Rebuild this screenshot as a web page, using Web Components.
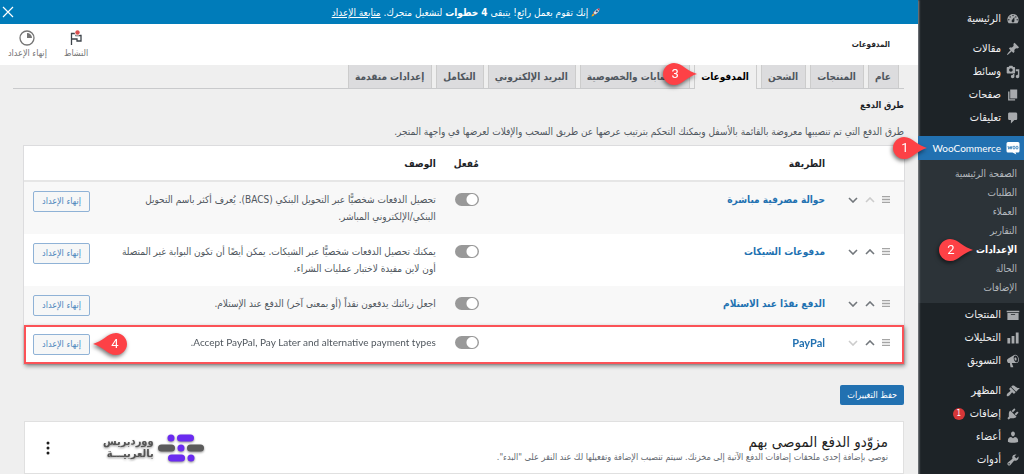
<!DOCTYPE html>
<html lang="ar" dir="rtl">
<head>
<meta charset="utf-8">
<meta name="viewport" content="width=device-width, initial-scale=1">
<title>المدفوعات ‹ WooCommerce</title>
<style>
  html, body { margin: 0; }
  body {
    font: 11px/17px "DejaVu Sans Condensed", "DejaVu Sans", "Noto Sans", sans-serif;
    color: #3c434a;
    background: #efefef;
  }
</style>
</head>
<body>
<admin-shell>
  <admin-menu slot="menu"></admin-menu>
  <setup-banner></setup-banner>
  <page-header heading="المدفوعات"></page-header>
  <settings-tabs></settings-tabs>
  <payment-methods></payment-methods>
  <provider-card>
    <span slot="title">مزوّدو الدفع الموصى بهم</span>
    <span slot="text">نوصي بإضافة إحدى ملحقات إضافات الدفع الآتية إلى مخزنك. سيتم تنصيب الإضافة وتفعيلها لك عند النقر على "البدء".</span>
  </provider-card>
</admin-shell>

<script>
const define = (name, render) => customElements.define(name, class extends HTMLElement {
  constructor() { super(); this.attachShadow({ mode: 'open' }); }
  connectedCallback() { this.shadowRoot.innerHTML = render(this); }
});

const ICONS = {
  dashboard: 'M3.76 16h12.48c1.1-1.37 1.76-3.11 1.76-5 0-4.42-3.58-8-8-8s-8 3.58-8 8c0 1.89.66 3.63 1.76 5zM10 4c.55 0 1 .45 1 1s-.45 1-1 1-1-.45-1-1 .45-1 1-1zM6 6c.55 0 1 .45 1 1s-.45 1-1 1-1-.45-1-1 .45-1 1-1zm8 0c.55 0 1 .45 1 1s-.45 1-1 1-1-.45-1-1 .45-1 1-1zm-5.37 5.55L12 7v6c0 1.1-.9 2-2 2s-2-.9-2-2c0-.57.24-1.08.63-1.45zM4 10c.55 0 1 .45 1 1s-.45 1-1 1-1-.45-1-1 .45-1 1-1zm12 0c.55 0 1 .45 1 1s-.45 1-1 1-1-.45-1-1 .45-1 1-1z',
  post: 'M10.44 3.02l1.82-1.82 6.36 6.35-1.83 1.82c-1.05-.68-2.48-.57-3.41.36l-.75.75c-.92.93-1.04 2.35-.35 3.41l-1.83 1.82-2.41-2.41-2.8 2.79c-.42.42-3.38 2.71-3.8 2.29s1.86-3.39 2.28-3.81l2.79-2.79L4.1 9.36l1.83-1.82c1.05.69 2.48.57 3.4-.36l.75-.75c.93-.92 1.05-2.35.36-3.41z',
  media: 'M13 11V4c0-.55-.45-1-1-1h-1.67L9 1H5L3.67 3H2c-.55 0-1 .45-1 1v7c0 .55.45 1 1 1h10c.55 0 1-.45 1-1zM7 4.5c1.38 0 2.5 1.12 2.5 2.5S8.38 9.5 7 9.5 4.5 8.38 4.5 7 5.62 4.5 7 4.5zM14 6h5v10.5c0 1.38-1.12 2.5-2.5 2.5S14 17.88 14 16.5s1.12-2.5 2.5-2.5c.17 0 .34.02.5.05V9h-3V6zm-4 8.05V13h2v3.5c0 1.38-1.12 2.5-2.5 2.5S7 17.88 7 16.5 8.12 14 9.5 14c.17 0 .34.02.5.05z',
  page: 'M6 15V2h10v13H6zm-1 1h8v2H3V5h2v11z',
  comments: 'M5 2h9c1.1 0 2 .9 2 2v7c0 1.1-.9 2-2 2h-2l-5 5v-5H5c-1.1 0-2-.9-2-2V4c0-1.1.9-2 2-2z',
  archive: 'M19 4v2H1V4h18zM2 7h16v10H2V7zm11 3V9H7v1h6z',
  chart: 'M18 18V2h-4v16h4zm-6 0V7H8v11h4zm-6 0v-8H2v8h4z',
  megaphone: 'M18.15 5.94c.46 1.62.38 3.22-.02 4.48-.42 1.28-1.26 2.18-2.3 2.48-.16.06-.26.06-.4.06-.06.02-.12.02-.18.02-.06.02-.14.02-.22.02h-6.8l2.22 5.5c.02.14-.06.26-.14.34-.08.1-.24.16-.34.16H6.95c-.1 0-.26-.06-.34-.16-.08-.08-.16-.2-.14-.34l-1-5.5H4.25l-.02-.02c-.5.06-1.08-.18-1.54-.62s-.88-1.08-1.06-1.88c-.24-.8-.2-1.56-.02-2.2.18-.62.58-1.08 1.06-1.3l.02-.02 9-5.4c.1-.06.18-.1.24-.16.06-.04.14-.08.24-.12.16-.08.28-.12.5-.18 1.04-.3 2.24.1 3.22.98s1.84 2.24 2.26 3.86zm-2.58 5.98h-.02c.4-.1.74-.34 1.04-.7.58-.7.86-1.76.86-3.04 0-.64-.1-1.3-.28-1.98-.34-1.36-1.02-2.5-1.78-3.24s-1.68-1.1-2.46-.88c-.82.22-1.4.96-1.7 2-.32 1.04-.28 2.36.06 3.72.38 1.36 1 2.5 1.8 3.24.78.74 1.62 1.1 2.48.88zm-2.54-7.08c.22-.04.42-.02.62.04.38.16.76.48 1.02 1s.42 1.2.42 1.78c0 .3-.04.56-.12.8-.18.48-.44.84-.86.94-.34.1-.8-.06-1.14-.4s-.64-.86-.78-1.5c-.18-.62-.12-1.24.02-1.72s.48-.84.82-.94z',
  appearance: 'M14.48 11.06L7.41 3.99l1.5-1.5c.5-.56 2.3-.47 3.51.32 1.21.8 1.43 1.28 2.91 2.1 1.18.64 2.45 1.26 4.45.85zm-.71.71L6.7 4.7 4.93 6.47c-.39.39-.39 1.02 0 1.41l1.06 1.06c.39.39.39 1.03 0 1.42-.6.6-1.43 1.11-2.21 1.69-.35.26-.7.53-1.01.84C1.43 14.23.4 16.08 1.4 17.07c.99 1 2.84-.03 4.18-1.36.31-.31.58-.66.85-1.02.57-.78 1.08-1.61 1.69-2.21.39-.39 1.02-.39 1.41 0l1.06 1.06c.39.39 1.02.39 1.41 0z',
  plugins: 'M13.11 4.36L9.87 7.6 8 5.73l3.24-3.24c.35-.34 1.05-.2 1.56.32.52.51.66 1.21.31 1.55zm-8 1.77l.91-1.12 9.01 9.01-1.19.84c-.71.71-2.63 1.16-3.82 1.16H6.14L4.9 17.26c-.59.59-1.54.59-2.12 0-.59-.58-.59-1.53 0-2.12l1.24-1.24v-3.88c0-1.13.4-3.19 1.09-3.89zm7.26 3.97l3.24-3.24c.34-.35 1.04-.21 1.55.31.52.51.66 1.21.31 1.55l-3.24 3.25z',
  users: 'M10 9.25c-2.27 0-2.73-3.44-2.73-3.44C7 4.02 7.82 2 9.97 2c2.16 0 2.98 2.02 2.71 3.81 0 0-.41 3.44-2.68 3.44zm0 2.57L12.72 10c2.39 0 4.52 2.33 4.52 4.53v2.49s-3.65 1.13-7.24 1.13c-3.65 0-7.24-1.13-7.24-1.13v-2.49c0-2.25 1.94-4.48 4.47-4.48z',
  tools: 'M16.68 9.77c-1.34 1.34-3.3 1.67-4.95.99l-5.41 6.52c-.99.99-2.59.99-3.58 0s-.99-2.59 0-3.57l6.52-5.42c-.68-1.65-.35-3.61.99-4.95 1.28-1.28 3.12-1.62 4.72-1.06l-2.89 2.89 2.82 2.82 2.86-2.87c.53 1.58.18 3.39-1.08 4.65zM3.81 16.21c.4.39 1.04.39 1.43 0 .4-.4.4-1.04 0-1.43-.39-.4-1.03-.4-1.43 0-.39.39-.39 1.03 0 1.43z'
};

/* Frame: menu column on the inline start, page content beside it */
define('admin-shell', () => `
  <style>
    :host { display: grid; grid-template-columns: 106px minmax(0, 1fr); min-height: 100vh; }
    main { box-shadow: 1px 0 2px #8c8f94; min-width: 0; }
  </style>
  <slot name="menu"></slot>
  <main><slot></slot></main>
`);

/* Numbered drop-shaped marker; tip="left" turns the point round */
define('step-pin', el => {
  const left = el.getAttribute('tip') === 'left';
  return `
  <style>
    :host { display: block; position: absolute; z-index: 2; width: 34px; height: 22px; pointer-events: none; }
    .pin { display: grid; direction: ltr; height: 22px; filter: drop-shadow(-1px 2px 2px rgba(0,0,0,.55)); }
    svg, .n { grid-area: 1 / 1; }
    .n { font: 13px/22px Roboto, sans-serif; color: #fff; text-align: center; width: 24px; justify-self: ${left ? 'end' : 'start'}; }
  </style>
  <div class="pin">
    <svg width="34" height="22" viewBox="0 0 34 22" aria-hidden="true"><path ${left ? 'transform="matrix(-1 0 0 1 34 0)"' : ''} fill="#fd4146" d="M11 0C5 0 0 5 0 11s5 11 11 11c4.500 0 8-2.200 11-4.800C26 14.500 30 12.200 34 11 30 9.800 26 7.500 22 4.800 19 2.200 15.500 0 11 0z"/></svg>
    <span class="n"><slot></slot></span>
  </div>`;
});

define('admin-menu', () => {
  const item = ([icon, label, extra = '']) => `
    <li><a href="#"><svg viewBox="0 0 20 20" aria-hidden="true"><path fill="#a7aaad" d="${ICONS[icon]}"/></svg>${label}${extra}</a></li>`;
  const group = list => `<ul>${list.map(item).join('')}</ul>`;
  const sub = ['الصفحة الرئيسية', 'الطلبات', 'العملاء', 'التقارير', 'الإعدادات', 'الحالة', 'الإضافات'];
  return `
  <style>
    :host { display: block; background: #1d2327; color: #f0f0f1; padding-top: 7px; }
    ul { list-style: none; margin: 0 0 7px; padding: 0; }
    a { display: flex; align-items: center; gap: 5px; height: 23px; padding-inline-start: 4px; color: inherit; text-decoration: none; }
    svg { width: 14px; height: 14px; flex: none; }
    [lang=en] { font-family: Lato, "Noto Sans", sans-serif; font-size: 10px; }
    .woo { position: relative; height: 24px; background: #2271b1; color: #fff; }
    .woo step-pin { left: -25px; top: 1px; }
    .current { margin-bottom: 0; }
    .sub { background: #2c3338; color: #b4b9be; font-size: 10px; padding: 4px 0 6px; margin: 0; }
    .sub a { position: relative; height: 19px; padding-inline-start: 7px; }
    .sub a[aria-current] { color: #fff; font-weight: bold; }
    .sub step-pin { left: 21px; top: -1px; font-weight: normal; }
    .badge { background: #d63638; color: #fff; border-radius: 6px; width: 12px; height: 12px; font-size: 8px; line-height: 12px; text-align: center; }
  </style>
  <nav aria-label="القائمة">
    ${group([['dashboard', 'الرئيسية']])}
    ${group([['post', 'مقالات'], ['media', 'وسائط'], ['page', 'صفحات'], ['comments', 'تعليقات']])}
    <ul class="current">
      <li>
        <a class="woo" href="#"><svg viewBox="0 0 14 14" aria-hidden="true"><path fill="#fff" d="M2 1h10q1.500 0 1.500 1.500v7.500Q13.500 11.500 12 11.500H9.500l.8 2L6.500 11.500H2Q.5 11.500 .5 10v-7.500Q.5 1 2 1z"/><path fill="none" stroke="#2271b1" stroke-width=".8" stroke-linejoin="round" d="M2 5l.8 3.200L4.200 5.500 5 8.200 6 5"/><ellipse cx="8" cy="6.600" rx="1" ry="1.500" fill="none" stroke="#2271b1" stroke-width=".8"/><ellipse cx="11" cy="6.600" rx="1" ry="1.500" fill="none" stroke="#2271b1" stroke-width=".8"/></svg><span lang="en">WooCommerce</span><step-pin>1</step-pin></a>
        <ul class="sub">${sub.map(s => s === 'الإعدادات'
          ? `<li><a href="#" aria-current="page">${s}<step-pin>2</step-pin></a></li>`
          : `<li><a href="#">${s}</a></li>`).join('')}</ul>
      </li>
    </ul>
    ${group([['archive', 'المنتجات'], ['chart', 'التحليلات'], ['megaphone', 'التسويق']])}
    ${group([['appearance', 'المظهر'], ['plugins', 'إضافات', '<span class="badge">1</span>'], ['users', 'أعضاء'], ['tools', 'أدوات']])}
  </nav>`;
});

define('setup-banner', () => `
  <style>
    :host { display: grid; grid-template-columns: 1fr auto; align-items: center; height: 24px; padding-inline-end: 2px; background: #007cba; color: #fff; }
    p { margin: 0; display: flex; justify-content: center; align-items: center; gap: 3px; font-size: 10px; }
    a { color: inherit; }
    button { display: flex; padding: 0; border: 0; background: none; color: inherit; }
  </style>
  <p>
    <svg width="9" height="9" viewBox="0 0 18 18" aria-hidden="true"><path fill="#c62b3c" d="M4 8l5-2-4 5zM10 14l2-5-5 4z"/><path fill="#d5e0e8" d="M17 1c-5 0-9 3-12 9l3 3c6-3 9-7 9-12z"/><path fill="#c62b3c" d="M17 1c-2 0-3 .3-4.500 1l3.500 3.500C16.700 4 17 3 17 1z"/><circle cx="11.500" cy="6.500" r="2.200" fill="#2d4f78"/><path fill="#f5a623" d="M5 11l2 2c-1 2.500-3 3.500-6 4 .5-3 1.500-5 4-6z"/></svg>
    <span>إنك تقوم بعمل رائع! يتبقى <b>4 خطوات</b> لتشغيل متجرك. <a href="#">متابعة الإعداد</a></span>
  </p>
  <button type="button" aria-label="إغلاق"><svg width="12" height="12" viewBox="0 0 12 12"><path stroke="currentColor" stroke-width="1.200" d="M1 1l10 10M11 1L1 11"/></svg></button>
`);

define('page-header', el => `
  <style>
    :host { display: flex; align-items: center; justify-content: space-between; height: 41px; padding-inline: 28px 8px; background: #fff; }
    h1 { margin: 0; font-size: 8px; line-height: 12px; color: #1d2327; }
    .actions { display: flex; gap: 17px; }
    button { display: flex; flex-direction: column; align-items: center; gap: 1px; padding: 0; border: 0; background: none; font: inherit; font-size: 9px; line-height: 12px; color: #757575; }
  </style>
  <h1>${el.getAttribute('heading')}</h1>
  <div class="actions">
    <button type="button"><svg width="16" height="16" viewBox="0 0 16 16" aria-hidden="true"><path fill="none" stroke="#3c434a" stroke-width="1.300" d="M3.500 15V3.500h4.500v2h5V11H9V9H3.500"/><circle cx="9.500" cy="2.800" r="2.800" fill="#fff"/><circle cx="9.500" cy="2.500" r="2.200" fill="#d94f4f"/></svg>النشاط</button>
    <button type="button"><svg width="16" height="16" viewBox="0 0 16 16" aria-hidden="true"><circle cx="8" cy="8" r="7" fill="none" stroke="#757575" stroke-width="1.300"/><path fill="#757575" d="M8 3a5 5 0 0 1 5 5H8z"/></svg>إنهاء الإعداد</button>
  </div>
`);

define('settings-tabs', () => {
  const tabs = ['عام', 'المنتجات', 'الشحن', 'المدفوعات', 'الحسابات والخصوصية', 'البريد الإلكتروني', 'التكامل', 'إعدادات متقدمة'];
  return `
  <style>
    :host { display: block; padding-inline: 14px 13px; }
    nav { display: flex; gap: 4px; padding-inline-start: 5px; height: 23px; border-bottom: 1px solid #c9cacc; }
    a { position: relative; padding-inline: 7px 6px; border: 1px solid #ccc; border-block: 0; background: #dcdcde; color: #50575e; font-size: 10px; font-weight: bold; line-height: 23px; text-decoration: none; white-space: nowrap; }
    a[aria-current] { background: #efefef; color: #000; height: 24px; }
    step-pin { left: -32px; top: -2px; font-weight: normal; }
  </style>
  <nav aria-label="الإعدادات">${tabs.map((t, i) => i === 3
    ? `<a href="#" aria-current="page">${t}<step-pin>3</step-pin></a>`
    : `<a href="#">${t}</a>`).join('')}</nav>`;
});

define('toggle-switch', el => `
  <style>
    :host { display: flex; align-items: center; height: 17px; }
    input { appearance: none; display: block; box-sizing: border-box; width: 24px; height: 13px; margin: 0; border-radius: 7px; background: radial-gradient(circle at 17px 50%, #fff 5px, #999 6px); }
  </style>
  <input type="checkbox" role="switch" aria-label="${el.getAttribute('label')}">
`);

define('payment-methods', () => {
  const rows = [
    ['حوالة مصرفية مباشرة', 'تحصيل الدفعات شخصيًّا عبر التحويل البنكي (BACS). يُعرف أكثر باسم التحويل البنكي/الإلكتروني المباشر.'],
    ['مدفوعات الشيكات', 'يمكنك تحصيل الدفعات شخصيًّا عبر الشيكات. يمكن أيضًا أن تكون البوابة غير المتصلة أون لاين مفيدة لاختبار عمليات الشراء.'],
    ['الدفع نقدًا عند الاستلام', 'اجعل زبائنك يدفعون نقداً (أو بمعنى آخر) الدفع عند الإستلام.'],
    ['<span lang="en">PayPal</span>', '<span lang="en">Accept PayPal, Pay Later and alternative payment types</span>.']
  ];
  const arrow = (d, off, label) => `<button class="move" type="button" aria-label="${label}"${off ? ' disabled' : ''}><svg width="10" height="6" viewBox="0 0 10 6"><path fill="none" stroke="currentColor" stroke-width="1.600" d="${d}"/></svg></button>`;
  const row = ([name, text], i) => {
    const last = i === rows.length - 1;
    return `<tr${last ? ' class="marked"' : ''}>
      <td><div class="sort"><svg width="8" height="7" viewBox="0 0 8 7" aria-hidden="true"><path stroke="#a5a5a5" stroke-width="1.400" d="M0 .5h8M0 3.500h8M0 6.500h8"/></svg>${arrow('M1 5l4-4 4 4', i === 0, 'أعلى')}${arrow('M1 1l4 4 4-4', last, 'أسفل')}</div></td>
      <td><a href="#">${name}</a></td>
      <td class="on"><toggle-switch label="${name.replace(/<[^>]*>/g, '')}"></toggle-switch></td>
      <td class="desc">${text}</td>
      <td><div class="act"><button class="setup" type="button">إنهاء الإعداد</button>${last ? '<step-pin tip="left">4</step-pin>' : ''}</div></td>
    </tr>`;
  };
  return `
  <style>
    :host { display: block; padding: 8px 14px 0 24px; font-size: 10px; }
    h2 { margin: 0; font-size: 9px; line-height: 17px; color: #1d2327; }
    p { margin: 9px 0 6px; color: #50575e; }
    [lang=en] { font-family: Lato, "Noto Sans", sans-serif; }
    a [lang=en] { font-size: 11px; }
    table { width: 100%; border-collapse: collapse; table-layout: fixed; background: #fff; box-shadow: 0 0 0 1px #dcdcde; }
    .c-sort { width: 69px; } .c-name { width: 39%; } .c-on { width: 46px; } .c-act { width: 76px; }
    th { height: 34px; padding: 0 10px; text-align: start; color: #1d2327; border-bottom: 2px solid #e6e6e6; white-space: nowrap; }
    td { padding: 9px 10px; vertical-align: top; color: #50575e; }
    td:first-child { padding-inline: 14px 0; }
    td:last-child { padding-inline-end: 9px; }
    .on { padding-inline: 13px 0; }
    .desc { padding-inline-end: 18px; }
    tbody tr:nth-child(odd) { background: #f8f8f8; }
    tbody a { color: #2271b1; font-weight: bold; text-decoration: none; }
    .sort { display: flex; align-items: center; gap: 7px; height: 17px; }
    .move { display: flex; padding: 0; border: 0; background: none; color: #72777c; }
    .move:disabled { color: #ccc; }
    .act { position: relative; }
    .setup { display: block; box-sizing: border-box; width: 57px; height: 21px; padding: 0; border: 1px solid #8fb2d6; border-radius: 2px; background: #f6f7f7; color: #4c86bc; font: inherit; font-size: 9px; line-height: 19px; white-space: nowrap; }
    .act step-pin { left: 60px; top: -1px; }
    .marked { outline: 2px solid #fb5257; outline-offset: -2px; filter: drop-shadow(1px 2px 2px rgba(0,0,0,.45)); background: #fff; }
    .save { display: block; margin-top: 21px; height: 20px; padding: 0 7px; border: 0; border-radius: 2px; background: #2271b1; color: #fff; font: inherit; font-size: 9px; line-height: 20px; }
  </style>
  <h2>طرق الدفع</h2>
  <p>طرق الدفع التي تم تنصيبها معروضة بالقائمة بالأسفل ويمكنك التحكم بترتيب عرضها عن طريق السحب والإفلات لعرضها في واجهة المتجر.</p>
  <table>
    <colgroup><col class="c-sort"><col class="c-name"><col class="c-on"><col><col class="c-act"></colgroup>
    <thead><tr><th></th><th scope="col">الطريقة</th><th class="on" scope="col">مُفعل</th><th scope="col">الوصف</th><th></th></tr></thead>
    <tbody>${rows.map(row).join('')}</tbody>
  </table>
  <button class="save" type="button">حفظ التغييرات</button>`;
});

define('provider-card', () => `
  <style>
    :host { display: flex; align-items: center; margin: 16px 14px 0 24px; padding-inline: 15px 20px; height: 51px; background: #fff; border: 1px solid #e0e0e0; }
    .copy { flex: 1; min-width: 0; }
    h2 { margin: 0; font-size: 15px; line-height: 18px; font-weight: normal; color: #1e1e1e; }
    p { margin: 0; font-size: 9px; line-height: 12px; color: #646970; }
    .logo { display: flex; align-items: center; gap: 4px; margin-inline-end: 52px; filter: drop-shadow(0 1px 1px rgba(0,0,0,.45)); }
    .logo b { font-size: 11px; line-height: 12px; color: #555; }
    .logo span { display: block; }
    button { display: flex; padding: 0; border: 0; background: none; }
  </style>
  <div class="copy"><h2><slot name="title"></slot></h2><p><slot name="text"></slot></p></div>
  <div class="logo">
    <svg width="46" height="28" viewBox="0 0 46 28" aria-hidden="true">
      <g fill="#6a2bf0"><circle cx="13" cy="4" r="3.500"/><rect x="19" y=".5" width="17" height="7" rx="3.500"/><circle cx="23" cy="14" r="3.500"/><rect x="10" y="20.500" width="17" height="7" rx="3.500"/><circle cx="33" cy="24" r="3.500"/></g>
      <g fill="#5b5b5b"><rect y="10.500" width="17" height="7" rx="3.500"/><rect x="29" y="10.500" width="17" height="7" rx="3.500"/></g>
    </svg>
    <b><span>ووردبريس</span><span>بالعربيـــة</span></b>
  </div>
  <button type="button" aria-label="خيارات"><svg width="6" height="14" viewBox="0 0 6 14"><g fill="#1e1e1e"><circle cx="3" cy="2" r="1.500"/><circle cx="3" cy="7" r="1.500"/><circle cx="3" cy="12" r="1.500"/></g></svg></button>
`);
</script>
</body>
</html>
